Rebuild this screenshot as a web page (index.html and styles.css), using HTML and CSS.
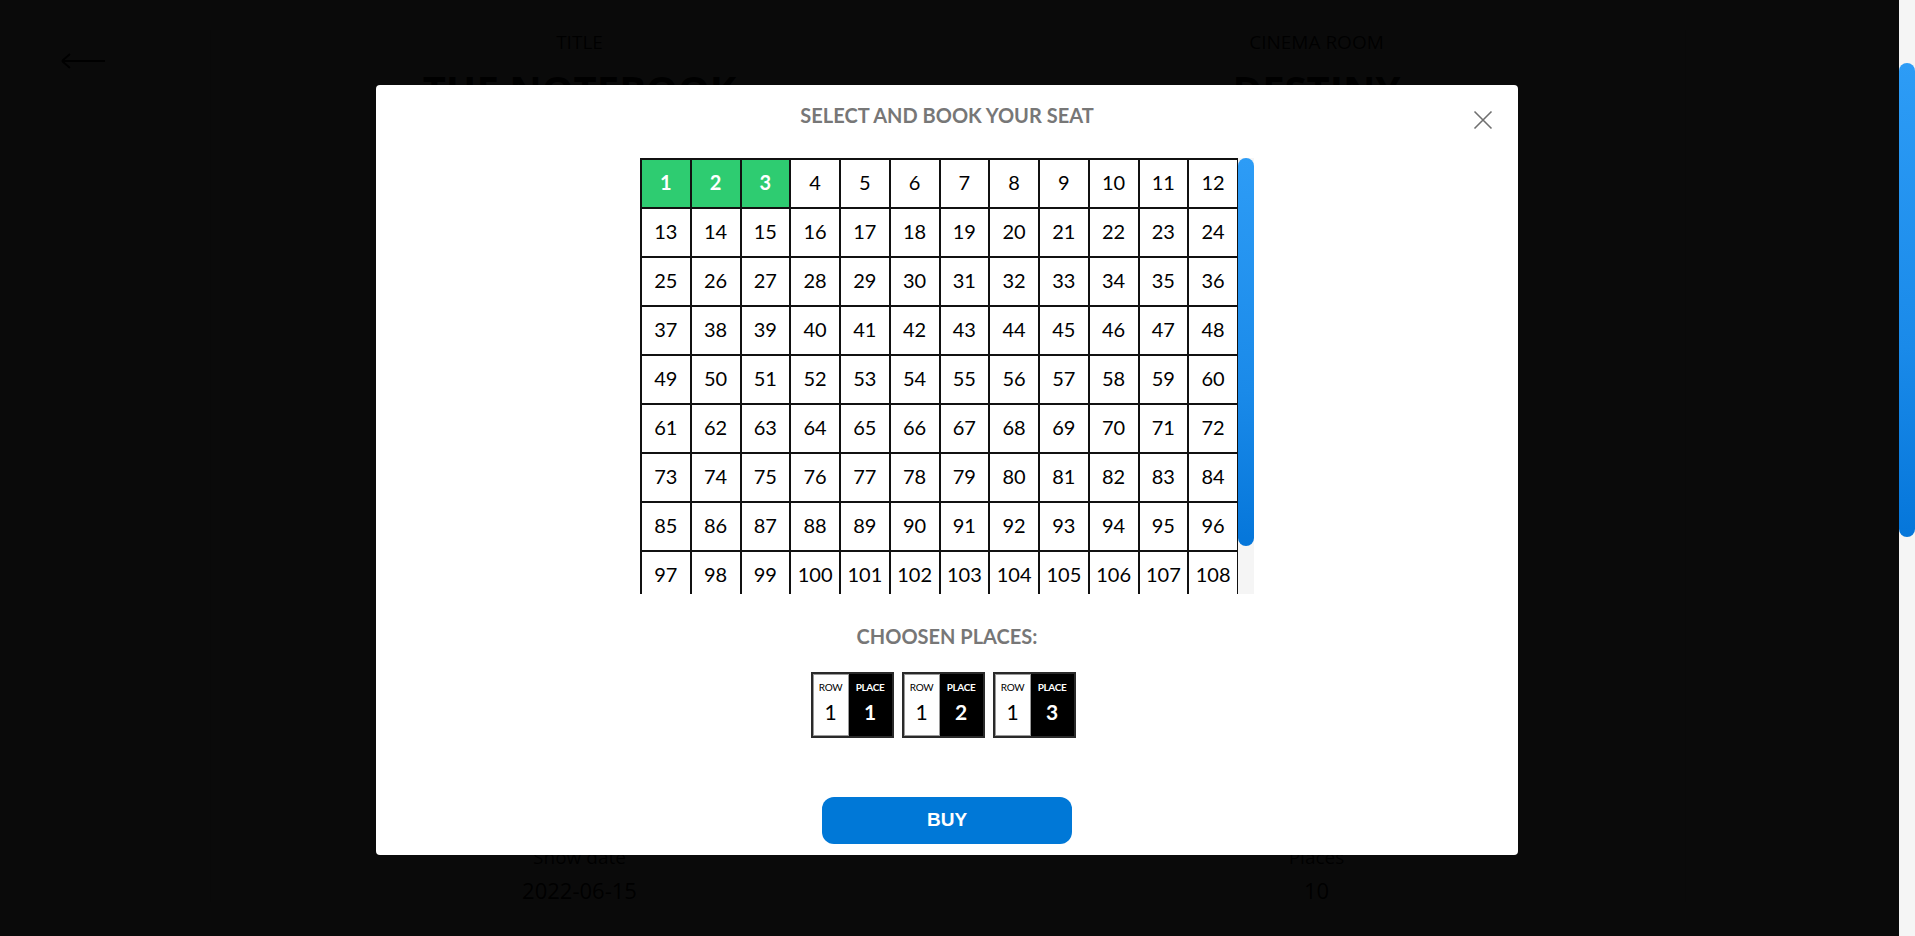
FILE: index.html
```html
<!DOCTYPE html>
<html lang="en">
<head>
<meta charset="utf-8">
<title>Book your seat</title>
<link rel="stylesheet" href="styles.css">
</head>
<body>
<div class="app">
  <div class="screen">
    <div class="page">
      <a class="back" href="#" aria-label="Back">
        <svg width="46" height="18" viewBox="0 0 46 18"><path d="M2 9 H45 M2 9 L10 2 M2 9 L10 16" fill="none" stroke="#000" stroke-width="2"/></svg>
      </a>
      <section class="details">
        <div class="col">
          <div class="label">TITLE</div>
          <div class="value big">THE NOTEBOOK</div>
          <div class="spacer"></div>
          <div class="label">Show date</div>
          <div class="value">2022-06-15</div>
        </div>
        <div class="col">
          <div class="label">CINEMA ROOM</div>
          <div class="value big">DESTINY</div>
          <div class="spacer"></div>
          <div class="label">Places</div>
          <div class="value">10</div>
        </div>
      </section>
    </div>

    <div class="overlay">
      <div class="modal">
        <button class="close" aria-label="Close">
          <svg width="20" height="20" viewBox="0 0 20 20"><path d="M1.5 1.5 L18.5 18.5 M18.5 1.5 L1.5 18.5" stroke="#6f6f6f" stroke-width="1.6" fill="none"/></svg>
        </button>
        <h2 class="modal-title">SELECT AND BOOK YOUR SEAT</h2>
        <div class="seat-box">
          <div class="seats-view">
            <div class="seats">
              <div class="seat selected">1</div><div class="seat selected">2</div><div class="seat selected">3</div><div class="seat">4</div><div class="seat">5</div><div class="seat">6</div><div class="seat">7</div><div class="seat">8</div><div class="seat">9</div><div class="seat">10</div><div class="seat">11</div><div class="seat">12</div>
              <div class="seat">13</div><div class="seat">14</div><div class="seat">15</div><div class="seat">16</div><div class="seat">17</div><div class="seat">18</div><div class="seat">19</div><div class="seat">20</div><div class="seat">21</div><div class="seat">22</div><div class="seat">23</div><div class="seat">24</div>
              <div class="seat">25</div><div class="seat">26</div><div class="seat">27</div><div class="seat">28</div><div class="seat">29</div><div class="seat">30</div><div class="seat">31</div><div class="seat">32</div><div class="seat">33</div><div class="seat">34</div><div class="seat">35</div><div class="seat">36</div>
              <div class="seat">37</div><div class="seat">38</div><div class="seat">39</div><div class="seat">40</div><div class="seat">41</div><div class="seat">42</div><div class="seat">43</div><div class="seat">44</div><div class="seat">45</div><div class="seat">46</div><div class="seat">47</div><div class="seat">48</div>
              <div class="seat">49</div><div class="seat">50</div><div class="seat">51</div><div class="seat">52</div><div class="seat">53</div><div class="seat">54</div><div class="seat">55</div><div class="seat">56</div><div class="seat">57</div><div class="seat">58</div><div class="seat">59</div><div class="seat">60</div>
              <div class="seat">61</div><div class="seat">62</div><div class="seat">63</div><div class="seat">64</div><div class="seat">65</div><div class="seat">66</div><div class="seat">67</div><div class="seat">68</div><div class="seat">69</div><div class="seat">70</div><div class="seat">71</div><div class="seat">72</div>
              <div class="seat">73</div><div class="seat">74</div><div class="seat">75</div><div class="seat">76</div><div class="seat">77</div><div class="seat">78</div><div class="seat">79</div><div class="seat">80</div><div class="seat">81</div><div class="seat">82</div><div class="seat">83</div><div class="seat">84</div>
              <div class="seat">85</div><div class="seat">86</div><div class="seat">87</div><div class="seat">88</div><div class="seat">89</div><div class="seat">90</div><div class="seat">91</div><div class="seat">92</div><div class="seat">93</div><div class="seat">94</div><div class="seat">95</div><div class="seat">96</div>
              <div class="seat">97</div><div class="seat">98</div><div class="seat">99</div><div class="seat">100</div><div class="seat">101</div><div class="seat">102</div><div class="seat">103</div><div class="seat">104</div><div class="seat">105</div><div class="seat">106</div><div class="seat">107</div><div class="seat">108</div>
              <div class="seat">109</div><div class="seat">110</div><div class="seat">111</div><div class="seat">112</div><div class="seat">113</div><div class="seat">114</div><div class="seat">115</div><div class="seat">116</div><div class="seat">117</div><div class="seat">118</div><div class="seat">119</div><div class="seat">120</div>
            </div>
          </div>
          <div class="vscroll seat-scroll"><div class="thumb"></div></div>
        </div>
        <h3 class="chosen-title">CHOOSEN PLACES:</h3>
        <div class="tickets">
          <div class="ticket">
            <div class="t-row"><span class="t-label">ROW</span><span class="t-num">1</span></div>
            <div class="t-place"><span class="t-label">PLACE</span><span class="t-num">1</span></div>
          </div>
          <div class="ticket">
            <div class="t-row"><span class="t-label">ROW</span><span class="t-num">1</span></div>
            <div class="t-place"><span class="t-label">PLACE</span><span class="t-num">2</span></div>
          </div>
          <div class="ticket">
            <div class="t-row"><span class="t-label">ROW</span><span class="t-num">1</span></div>
            <div class="t-place"><span class="t-label">PLACE</span><span class="t-num">3</span></div>
          </div>
        </div>
        <button class="buy">BUY</button>
      </div>
    </div>
  </div>
  <div class="vscroll page-scroll"><div class="thumb"></div></div>
</div>
</body>
</html>
```

FILE: styles.css
```css
html, body {
  margin: 0;
  padding: 0;
  height: 100%;
  overflow: hidden;
}

body {
  background: #ffffff;
  color: #000;
  font-family: "Open Sans", "Liberation Sans", sans-serif;
}

.app {
  display: flex;
  height: 100vh;
}

.screen {
  flex: 1;
  position: relative;
  overflow: hidden;
  background: #fff;
}

/* drawn scrollbars */
.vscroll {
  width: 16px;
  flex: none;
  background: #f5f5f5;
}

.vscroll .thumb {
  width: 16px;
  border-radius: 8px;
  background: linear-gradient(180deg, #2d9cf6 0%, #1a8ae9 60%, #0576da 100%);
}

.page-scroll .thumb {
  margin-top: 63px;
  height: 474px;
}

.seat-scroll .thumb {
  height: 388px;
}

/* underlying page */
.page {
  display: flex;
  padding: 30px 0 0 60px;
}

.back {
  display: block;
  width: 46px;
  height: 18px;
  margin-top: 22px;
}

.details {
  margin-left: 104px;
  width: 1474px;
  display: grid;
  grid-template-columns: 1fr 1fr;
  border-left: 1px solid #e6e6e6;
  border-right: 1px solid #e6e6e6;
}

.col {
  display: flex;
  flex-direction: column;
  align-items: center;
}

.label {
  font-size: 19px;
  line-height: 24px;
  color: #111;
}

.value {
  font-size: 22px;
  line-height: 24px;
  margin-top: 9px;
}

.value.big {
  font-size: 40px;
  line-height: 48px;
  font-weight: 700;
  margin-top: 12px;
}

.spacer {
  height: 731px;
}

/* overlay + modal */
.overlay {
  position: absolute;
  inset: 0;
  background: rgba(0, 0, 0, 0.96);
  display: flex;
  align-items: center;
  justify-content: center;
  padding: 4px 5px 0 0;
  box-sizing: border-box;
}

.modal {
  position: relative;
  width: 1142px;
  box-sizing: border-box;
  background: #fff;
  border-radius: 4px;
  padding: 18px 0 11px;
  display: flex;
  flex-direction: column;
  align-items: center;
  font-family: Lato, "Open Sans", sans-serif;
}

.close {
  position: absolute;
  top: 25px;
  right: 25px;
  width: 20px;
  height: 20px;
  padding: 0;
  border: none;
  background: transparent;
  display: flex;
  cursor: pointer;
}

.modal-title {
  margin: 0;
  font-size: 20px;
  line-height: 24px;
  font-weight: 700;
  color: #777;
}

.seat-box {
  margin-top: 31px;
  display: flex;
  height: 436px;
}

.seats-view {
  width: 598px;
  height: 436px;
  overflow: hidden;
}

.seats {
  display: grid;
  grid-template-columns: repeat(12, 1fr);
  border-left: 1px solid #111;
  border-top: 1px solid #111;
}

.seat {
  height: 49px;
  box-sizing: border-box;
  border: 1px solid #111;
  padding-bottom: 4px;
  display: flex;
  align-items: center;
  justify-content: center;
  font-size: 20px;
  color: #000;
  background: #fff;
}

.seat.selected {
  background: #2ecc71;
  color: #fff;
  font-weight: 700;
}

.chosen-title {
  margin: 30px 0 0;
  font-size: 20px;
  line-height: 24px;
  font-weight: 700;
  color: #777;
}

.tickets {
  margin: 24px 8px 0 0;
  display: flex;
  gap: 8px;
}

.ticket {
  display: flex;
  width: 83px;
  height: 66px;
  box-sizing: border-box;
  border: 2px solid #2a2a2a;
}

.t-row, .t-place {
  display: flex;
  flex-direction: column;
  align-items: center;
  padding-top: 7px;
  box-sizing: border-box;
}

.t-row {
  width: 36px;
  background: #fff;
  color: #000;
  box-shadow: inset 0 0 0 1px #9a9a9a;
}

.t-place {
  flex: 1;
  background: #000;
  color: #fff;
  font-weight: 700;
}

.t-label {
  font-size: 10px;
  line-height: 12px;
  letter-spacing: -0.4px;
}

.t-num {
  margin-top: 7px;
  font-size: 21px;
  line-height: 24px;
}

.buy {
  margin-top: 59px;
  width: 250px;
  height: 47px;
  border: none;
  border-radius: 12px;
  background: #0078d7;
  color: #fff;
  font-family: "Liberation Sans", Arial, sans-serif;
  font-weight: 700;
  font-size: 19px;
  padding-bottom: 2px;
  cursor: pointer;
}
```
